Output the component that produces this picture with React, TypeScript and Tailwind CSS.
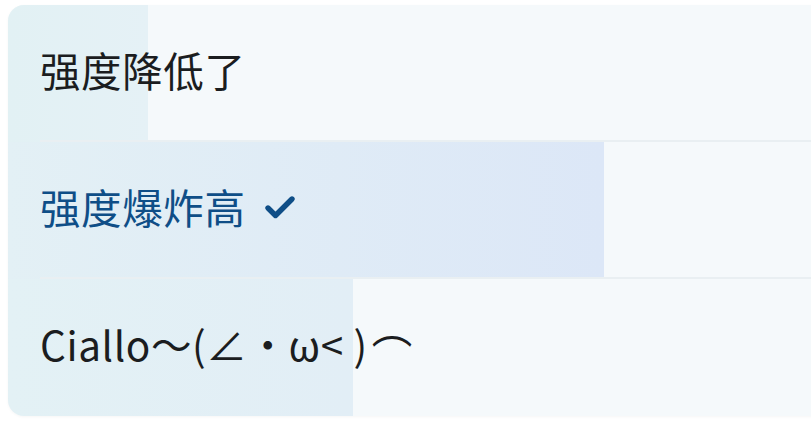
import { Check } from 'lucide-react';

type Option = {
  label: string;
  tail?: string;
  fill: number;
  selected?: boolean;
  tone: string;
};

const OPTIONS: Option[] = [
  { label: '强度降低了', fill: 140, tone: 'from-[#e2f1f4] to-[#e5f1f6]' },
  { label: '强度爆炸高', fill: 596, selected: true, tone: 'from-[#e3f0f5] to-[#dce7f7]' },
  { label: 'Ciallo～(∠・ω< )', tail: '⌒', fill: 345, tone: 'from-[#e3f1f5] to-[#e2eef6]' },
];

export default function App() {
  return (
    <div className="h-[434px] w-[811px] overflow-hidden bg-white pl-2 pt-[5px]">
      <div
        className="mr-[-24px] overflow-hidden rounded-2xl bg-[#f5f9fb] shadow-[0_1px_3px_rgba(0,0,0,0.04)]"
        style={{ fontFamily: '"Noto Sans CJK SC", "Noto Sans", sans-serif' }}
      >
        {OPTIONS.map((o, i) => (
          <div key={i} className="relative h-[137px]">
            <div
              className={`absolute inset-y-0 left-0 bg-gradient-to-r ${o.tone}`}
              style={{ width: o.fill }}
            />
            <div className="relative flex h-full items-center pb-[6px] pl-8">
              <span
                className={`text-[40.5px] leading-none tracking-[0.6px] ${
                  o.selected ? 'text-[#0f4e87]' : 'text-[#1b1d1f]'
                }`}
              >
                {o.label}
                {o.tail && <span className="relative top-[10px] ml-1">{o.tail}</span>}
              </span>
              {o.selected && (
                <Check className="ml-4 h-9 w-9 text-[#0f4e87]" strokeWidth={3.6} />
              )}
            </div>
            {i < OPTIONS.length - 1 && (
              <div className="absolute bottom-0 left-8 right-0 h-[2px] bg-[#e9eff2]" />
            )}
          </div>
        ))}
      </div>
    </div>
  );
}
